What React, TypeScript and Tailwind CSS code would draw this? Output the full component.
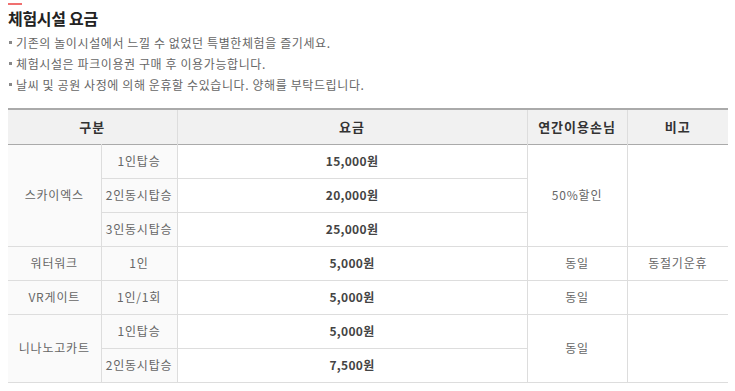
import React from "react";

const font = { fontFamily: '"Noto Sans CJK KR", "Noto Sans", sans-serif' };

const cellBase = "border-l border-[#dddddd] text-center align-middle p-0";

export default function App() {
  const bullets = [
    "기존의 놀이시설에서 느낄 수 없었던 특별한체험을 즐기세요.",
    "체험시설은 파크이용권 구매 후 이용가능합니다.",
    "날씨 및 공원 사정에 의해 운휴할 수있습니다. 양해를 부탁드립니다.",
  ];
  const left = "text-[12px] text-[#666666] bg-[#fafafa] tracking-[0.8px]";
  const price = "text-[12px] font-bold text-[#444444] bg-white tracking-[0.3px]";
  const plain = "text-[12px] text-[#666666] bg-white tracking-[0.8px]";
  return (
    <div className="w-[735px] h-[391px] bg-white px-2" style={font}>
      <div className="pt-[3px]">
        <div className="w-[14px] h-[2px] bg-[#f07070]" />
      </div>
      <div className="mt-[2px] text-[16px] leading-[22px] font-bold text-[#222222] tracking-[-0.3px]">체험시설 요금</div>
      <ul className="mt-[3px]">
        {bullets.map((b) => (
          <li key={b} className="flex items-center h-[21px] text-[12px] text-[#666666] tracking-[0.6px]">
            <span className="w-[3px] h-[3px] bg-[#888888] ml-[1px] mr-[4px]" />
            {b}
          </li>
        ))}
      </ul>
      <table className="mt-[13px] w-[720px] border-collapse table-fixed border-t-2 border-[#aaaaaa]">
        <colgroup>
          <col className="w-[93px]" />
          <col className="w-[76px]" />
          <col className="w-[350px]" />
          <col className="w-[100px]" />
          <col className="w-[101px]" />
        </colgroup>
        <thead>
          <tr className="h-[35px] bg-[#f1f1f1] border-b border-[#aaaaaa]">
            <th colSpan={2} className="p-0 text-[13px] font-bold text-[#333333] text-center tracking-[1px]">구분</th>
            <th className={`${cellBase} text-[13px] font-bold text-[#333333] tracking-[1px]`}>요금</th>
            <th className={`${cellBase} text-[13px] font-bold text-[#333333] tracking-[1px]`}>연간이용손님</th>
            <th className={`${cellBase} text-[13px] font-bold text-[#333333] tracking-[1px]`}>비고</th>
          </tr>
        </thead>
        <tbody>
          <tr className="h-[34px] border-b border-[#dddddd]">
            <td rowSpan={3} className={`p-0 text-center ${left}`}>스카이엑스</td>
            <td className={`${cellBase} ${left}`}>1인탑승</td>
            <td className={`${cellBase} ${price}`}>15,000원</td>
            <td rowSpan={3} className={`${cellBase} ${plain}`}>50%할인</td>
            <td rowSpan={3} className={`${cellBase} ${plain}`}></td>
          </tr>
          <tr className="h-[34px] border-b border-[#dddddd]">
            <td className={`${cellBase} ${left}`}>2인동시탑승</td>
            <td className={`${cellBase} ${price}`}>20,000원</td>
          </tr>
          <tr className="h-[34px] border-b border-[#dddddd]">
            <td className={`${cellBase} ${left}`}>3인동시탑승</td>
            <td className={`${cellBase} ${price}`}>25,000원</td>
          </tr>
          <tr className="h-[34px] border-b border-[#dddddd]">
            <td className={`p-0 text-center ${left}`}>워터워크</td>
            <td className={`${cellBase} ${left}`}>1인</td>
            <td className={`${cellBase} ${price}`}>5,000원</td>
            <td className={`${cellBase} ${plain}`}>동일</td>
            <td className={`${cellBase} ${plain}`}>동절기운휴</td>
          </tr>
          <tr className="h-[34px] border-b border-[#dddddd]">
            <td className={`p-0 text-center ${left}`}>VR게이트</td>
            <td className={`${cellBase} ${left}`}>1인/1회</td>
            <td className={`${cellBase} ${price}`}>5,000원</td>
            <td className={`${cellBase} ${plain}`}>동일</td>
            <td className={`${cellBase} ${plain}`}></td>
          </tr>
          <tr className="h-[34px] border-b border-[#dddddd]">
            <td rowSpan={2} className={`p-0 text-center ${left}`}>니나노고카트</td>
            <td className={`${cellBase} ${left}`}>1인탑승</td>
            <td className={`${cellBase} ${price}`}>5,000원</td>
            <td rowSpan={2} className={`${cellBase} ${plain}`}>동일</td>
            <td rowSpan={2} className={`${cellBase} ${plain}`}></td>
          </tr>
          <tr className="h-[34px] border-b border-[#dddddd]">
            <td className={`${cellBase} ${left}`}>2인동시탑승</td>
            <td className={`${cellBase} ${price}`}>7,500원</td>
          </tr>
        </tbody>
      </table>
    </div>
  );
}
